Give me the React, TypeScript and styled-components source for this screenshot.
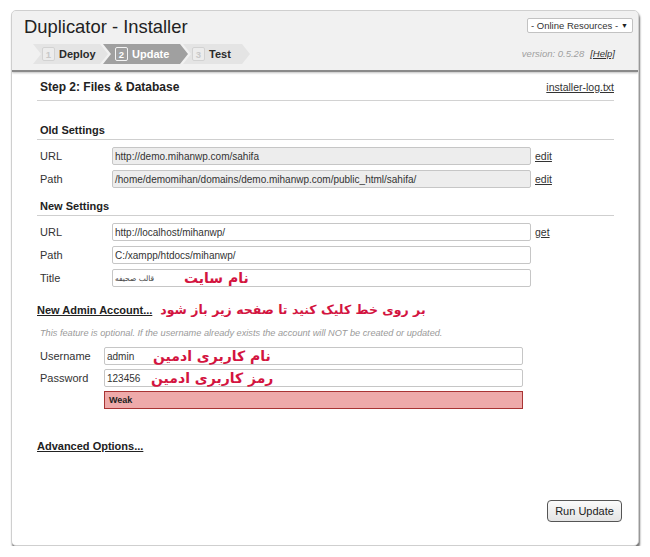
import styled, { createGlobalStyle } from "styled-components";

const GlobalStyle = createGlobalStyle`
  body {
    margin: 0;
    background: #fff;
    font-family: "Liberation Sans", Arial, sans-serif;
    color: #222;
  }
`;

const Page = styled.div`
  padding: 10px 11px 0 11px;
`;

const Window = styled.div`
  display: flex;
  flex-direction: column;
  box-sizing: border-box;
  height: 536px;
  border: 1px solid #cfcfcf;
  border-radius: 5px;
  background: #fff;
  box-shadow: 1px 3px 2px rgba(0, 0, 0, 0.55);
  overflow: hidden;
`;

const Header = styled.header`
  display: flex;
  justify-content: space-between;
  height: 59px;
  background: #f1f1f1;
  border-bottom: 2px solid #8a8a8a;
  box-shadow: 0 1px 2px rgba(0, 0, 0, 0.25);
`;

const HeaderLeft = styled.div`
  padding: 5px 0 0 12px;
`;

const Title = styled.h1`
  margin: 0;
  font-size: 18.4px;
  line-height: 22px;
  font-weight: normal;
  color: #222;
`;

const Steps = styled.div`
  display: flex;
  margin-top: 6px;
  margin-left: 9px;
`;

const Step = styled.div<{ $active?: boolean; $width: number }>`
  display: flex;
  align-items: center;
  gap: 4px;
  box-sizing: border-box;
  width: ${p => p.$width}px;
  height: 20px;
  padding-left: ${p => (p.$active ? 12 : 9)}px;
  margin-right: -5px;
  background: ${p => (p.$active ? "#a0a0a0" : "#e4e4e4")};
  color: ${p => (p.$active ? "#fff" : "#2a2a2a")};
  font-size: 11px;
  font-weight: bold;
  clip-path: polygon(0 0, calc(100% - 8px) 0, 100% 50%, calc(100% - 8px) 100%, 0 100%, 8px 50%);
`;

const StepNum = styled.span<{ $active?: boolean }>`
  display: inline-flex;
  align-items: center;
  justify-content: center;
  box-sizing: border-box;
  width: 13px;
  height: 14px;
  border: 1px solid ${p => (p.$active ? "#f4f4f4" : "#d2d2d2")};
  border-radius: 2px;
  background: ${p => (p.$active ? "transparent" : "#ececec")};
  color: ${p => (p.$active ? "#fff" : "#c8c8c8")};
  font-size: 9.5px;
  font-weight: bold;
`;

const HeaderRight = styled.div`
  display: flex;
  flex-direction: column;
  align-items: flex-end;
  padding: 7px 5px 0 0;
`;

const ResourceSelect = styled.div`
  display: flex;
  align-items: center;
  justify-content: space-between;
  box-sizing: border-box;
  width: 106px;
  height: 15px;
  padding: 0 4px 0 3px;
  border: 1px solid #c2c2c2;
  border-radius: 2px;
  background: #fff;
  font-size: 9.5px;
  color: #333;
`;

const Arrow = styled.span`
  font-size: 7px;
  color: #222;
`;

const Version = styled.div`
  margin: 15px 18px 0 0;
  font-size: 9.5px;
  line-height: 12px;
  font-style: italic;
  color: #a0a0a0;
`;

const HelpLink = styled.a`
  margin-left: 6px;
  color: #333;
  text-decoration: underline;
`;

const Content = styled.main`
  flex: 1;
  padding: 0 24px 0 25px;
`;

const StepRow = styled.div`
  display: flex;
  justify-content: space-between;
  align-items: baseline;
  margin-top: 6px;
  padding-bottom: 4px;
  line-height: 18px;
  border-bottom: 1px solid #d2d2d2;
`;

const StepTitle = styled.div`
  padding-left: 3px;
  font-size: 12px;
  font-weight: bold;
  color: #222;
`;

const LogLink = styled.a`
  font-size: 10.5px;
  color: #333;
  text-decoration: underline;
`;

const SectionTitle = styled.div<{ $top: number }>`
  margin-top: ${p => p.$top}px;
  padding-left: 3px;
  line-height: 18px;
  font-size: 11px;
  font-weight: bold;
  color: #222;
  border-bottom: 1px solid #cfcfcf;
`;

const Fields = styled.div<{ $gap: number }>`
  display: flex;
  flex-direction: column;
  gap: ${p => p.$gap}px;
  margin-top: 7px;
`;

const Row = styled.div`
  display: flex;
  align-items: center;
  height: 18px;
`;

const Label = styled.span<{ $width: number }>`
  box-sizing: border-box;
  width: ${p => p.$width}px;
  padding-left: 3px;
  font-size: 11px;
  color: #333;
`;

const InputBox = styled.div<{ $readOnly?: boolean }>`
  position: relative;
  display: flex;
  align-items: center;
  box-sizing: border-box;
  width: 419px;
  height: 18px;
  padding: 0 2px;
  border: 1px solid #c6c6c6;
  border-radius: 2px;
  background: ${p => (p.$readOnly ? "#ededed" : "#fff")};
  font-size: 10px;
  color: #333;
`;

const SmallValue = styled.span`
  font-family: "DejaVu Sans", sans-serif;
  font-size: 7.5px;
  color: #444;
`;

const Note = styled.span<{ $left: number }>`
  position: absolute;
  left: ${p => p.$left}px;
  top: 50%;
  transform: translateY(-52%);
  font-family: "DejaVu Sans", sans-serif;
  font-size: 14px;
  font-weight: bold;
  color: #d3143f;
  white-space: nowrap;
`;

const SideLink = styled.a`
  margin-left: 4px;
  font-size: 10.5px;
  color: #333;
  text-decoration: underline;
`;

const AdminRow = styled.div`
  display: flex;
  align-items: center;
  gap: 8px;
  margin-top: 14px;
  line-height: 18px;
`;

const ToggleLink = styled.a`
  font-size: 11px;
  font-weight: bold;
  color: #222;
  text-decoration: underline;
`;

const Hint = styled.span`
  font-family: "DejaVu Sans", sans-serif;
  font-size: 12.5px;
  font-weight: bold;
  color: #d3143f;
`;

const Optional = styled.div`
  margin-top: 8px;
  padding-left: 3px;
  line-height: 13px;
  font-size: 9.2px;
  font-style: italic;
  color: #9a9a9a;
`;

const Strength = styled.div`
  display: flex;
  align-items: center;
  box-sizing: border-box;
  width: 419px;
  height: 18px;
  margin-left: 67px;
  padding-left: 4px;
  border: 1px solid #a83434;
  background: #eeaaaa;
  font-size: 9px;
  font-weight: bold;
  color: #222;
`;

const Advanced = styled.div`
  margin-top: 27px;
  line-height: 18px;
`;

const Footer = styled.footer`
  display: flex;
  justify-content: flex-end;
  padding: 0 16px 23px 0;
`;

const RunButton = styled.button`
  width: 75px;
  height: 22px;
  border: 1px solid #555;
  border-radius: 4px;
  background: linear-gradient(#fbfbfb, #e4e4e4);
  font-family: "Liberation Sans", Arial, sans-serif;
  font-size: 11px;
  color: #222;
`;

function App() {
  return (
    <Page>
      <GlobalStyle />
      <Window>
        <Header>
          <HeaderLeft>
            <Title>Duplicator - Installer</Title>
            <Steps>
              <Step $width={75}>
                <StepNum>1</StepNum>Deploy
              </Step>
              <Step $width={85} $active>
                <StepNum $active>2</StepNum>Update
              </Step>
              <Step $width={67}>
                <StepNum>3</StepNum>Test
              </Step>
            </Steps>
          </HeaderLeft>
          <HeaderRight>
            <ResourceSelect>
              <span>- Online Resources -</span>
              <Arrow>▼</Arrow>
            </ResourceSelect>
            <Version>
              version: 0.5.28<HelpLink>[Help]</HelpLink>
            </Version>
          </HeaderRight>
        </Header>

        <Content>
          <StepRow>
            <StepTitle>Step 2: Files &amp; Database</StepTitle>
            <LogLink>installer-log.txt</LogLink>
          </StepRow>

          <SectionTitle $top={20}>Old Settings</SectionTitle>
          <Fields $gap={5}>
            <Row>
              <Label $width={75}>URL</Label>
              <InputBox $readOnly>http://demo.mihanwp.com/sahifa</InputBox>
              <SideLink>edit</SideLink>
            </Row>
            <Row>
              <Label $width={75}>Path</Label>
              <InputBox $readOnly>/home/demomihan/domains/demo.mihanwp.com/public_html/sahifa/</InputBox>
              <SideLink>edit</SideLink>
            </Row>
          </Fields>

          <SectionTitle $top={9}>New Settings</SectionTitle>
          <Fields $gap={5}>
            <Row>
              <Label $width={75}>URL</Label>
              <InputBox>http://localhost/mihanwp/</InputBox>
              <SideLink>get</SideLink>
            </Row>
            <Row>
              <Label $width={75}>Path</Label>
              <InputBox>C:/xampp/htdocs/mihanwp/</InputBox>
            </Row>
            <Row>
              <Label $width={75}>Title</Label>
              <InputBox>
                <SmallValue dir="rtl">قالب صحیفه</SmallValue>
                <Note $left={71} dir="rtl">نام سایت</Note>
              </InputBox>
            </Row>
          </Fields>

          <AdminRow>
            <ToggleLink>New Admin Account...</ToggleLink>
            <Hint dir="rtl">بر روی خط کلیک کنید تا صفحه زیر باز شود</Hint>
          </AdminRow>
          <Optional>
            This feature is optional. If the username already exists the account will NOT be created or updated.
          </Optional>
          <Fields $gap={4}>
            <Row>
              <Label $width={67}>Username</Label>
              <InputBox>
                admin
                <Note $left={48} dir="rtl">نام کاربری ادمین</Note>
              </InputBox>
            </Row>
            <Row>
              <Label $width={67}>Password</Label>
              <InputBox>
                123456
                <Note $left={46} dir="rtl">رمز کاربری ادمین</Note>
              </InputBox>
            </Row>
            <Strength>Weak</Strength>
          </Fields>

          <Advanced>
            <ToggleLink>Advanced Options...</ToggleLink>
          </Advanced>
        </Content>

        <Footer>
          <RunButton>Run Update</RunButton>
        </Footer>
      </Window>
    </Page>
  );
}

export default App;
